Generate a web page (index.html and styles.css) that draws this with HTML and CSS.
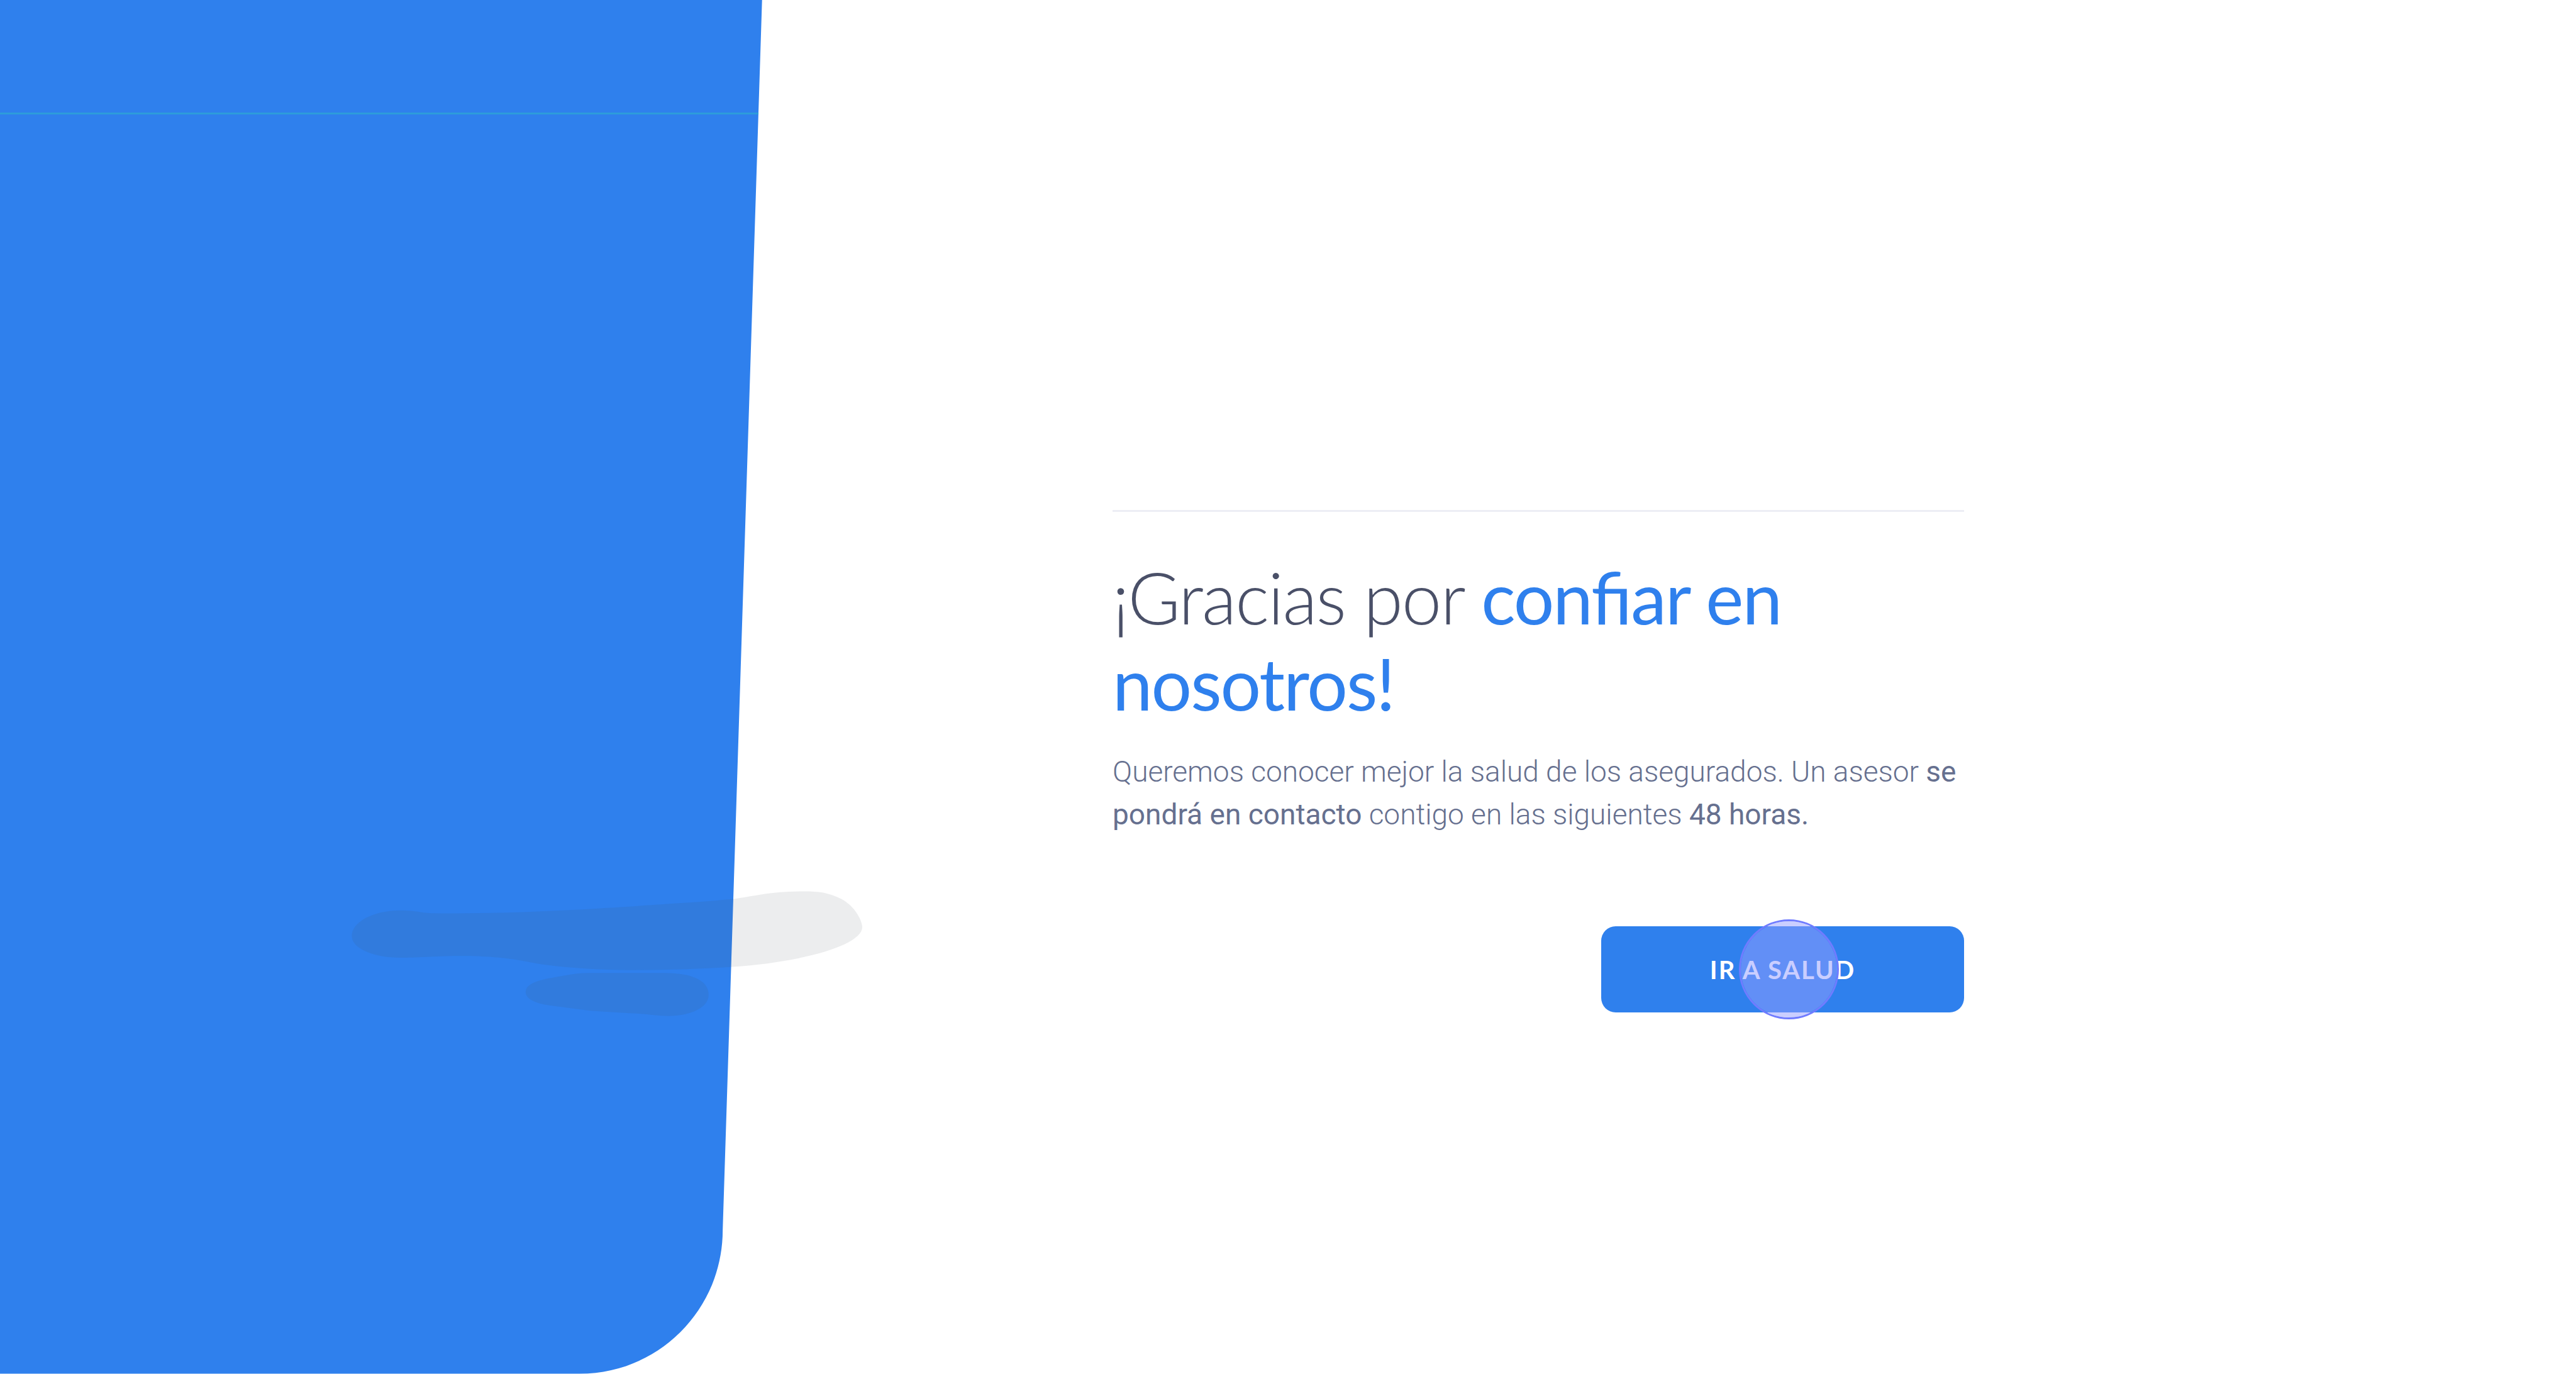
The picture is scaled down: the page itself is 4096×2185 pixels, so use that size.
FILE: index.html
```html
<!DOCTYPE html>
<html lang="es">
<head>
<meta charset="utf-8">
<meta name="viewport" content="width=device-width, initial-scale=1">
<title>Gracias por confiar en nosotros</title>
<link rel="stylesheet" href="styles.css">
</head>
<body>
<svg class="backdrop" viewBox="0 0 4320 2304" preserveAspectRatio="xMinYMin meet" aria-hidden="true">
  <path class="panel" d="M0 0H1278L1212 2063C1212 2196 1105 2304 972 2304H0Z"/>
  <path class="panel-line" d="M0 188.8H1272V192H0Z"/>
  <g class="shade" transform="translate(560 1460) scale(.5868 .33333)">
    <path d="M51 330C51 262 110 201 190 201C240 201 248 215 285 215C560 221 850 180 1000 163C1060 156 1100 150 1143 143C1200 130 1245 105 1345 105C1385 105 1412 110 1450 143C1490 180 1510 255 1510 285C1510 375 1345 460 1140 485C1040 496 960 501 860 501C750 501 650 488 580 468C520 448 470 430 365 430C290 430 230 439 190 439C110 439 51 390 51 330Z"/>
    <path d="M548 612C548 575 575 555 620 541C650 532 690 516 725 516H945C1030 516 1071 560 1071 625C1071 690 1020 732 955 732C925 732 900 724 865 720C810 713 745 710 700 698L612 678C570 666 548 642 548 612Z"/>
  </g>
</svg>
<main class="page">
  <section class="message">
    <h1 class="title">¡Gracias por <strong>confiar en nosotros!</strong></h1>
    <p class="text">Queremos conocer mejor la salud de los asegurados. Un asesor <strong>se pondrá en contacto</strong> contigo en las siguientes <strong>48 horas.</strong></p>
    <div class="actions">
      <button class="button" type="button">IR A SALUD</button>
      <span class="touch" aria-hidden="true"></span>
    </div>
  </section>
</main>
</body>
</html>
```
FILE: styles.css
```css
* {
  box-sizing: border-box;
}

body {
  margin: 0;
  min-height: 100vh;
  background: #fff;
  overflow-x: hidden;
}

.backdrop {
  position: absolute;
  top: 0;
  left: 0;
  width: 100%;
  height: auto;
  display: block;
}

.panel {
  fill: #2f80ed;
}

.panel-line {
  fill: #2d9cdb;
}

.shade {
  fill: #404b5a;
  fill-opacity: .1;
}

.page {
  position: relative;
  display: grid;
  grid-template-columns: 1769fr 1354fr 973fr;
  padding-top: 811px;
}

.message {
  grid-column: 2;
  min-width: 0;
  padding-top: 66px;
  border-top: 3px solid #edeef5;
}

.title {
  margin: 0;
  color: #4a5068;
  font: 300 114px/137px Lato, sans-serif;
  font-feature-settings: "liga" 1;
  letter-spacing: -2px;
}

.title strong {
  color: #2f80ed;
  font-weight: 400;
}

.text {
  margin: 39px 0 0;
  color: #66708f;
  font: 300 46px/68px Roboto, sans-serif;
}

.text strong {
  font-weight: 400;
}

.actions {
  position: relative;
  width: 577px;
  margin: 144px 0 0 auto;
}

.button {
  display: block;
  width: 100%;
  height: 137px;
  padding: 0;
  border: 0;
  border-radius: 23px;
  background: #2f80ed;
  color: #fff;
  font: 700 40px/48px Lato, sans-serif;
  letter-spacing: 2px;
  cursor: pointer;
}

.touch {
  position: absolute;
  top: -11px;
  left: 219px;
  width: 159px;
  height: 159px;
  border: 3px solid #707cff;
  border-radius: 50%;
  background: rgba(149, 157, 255, .5);
  background-clip: padding-box;
  pointer-events: none;
}
```
